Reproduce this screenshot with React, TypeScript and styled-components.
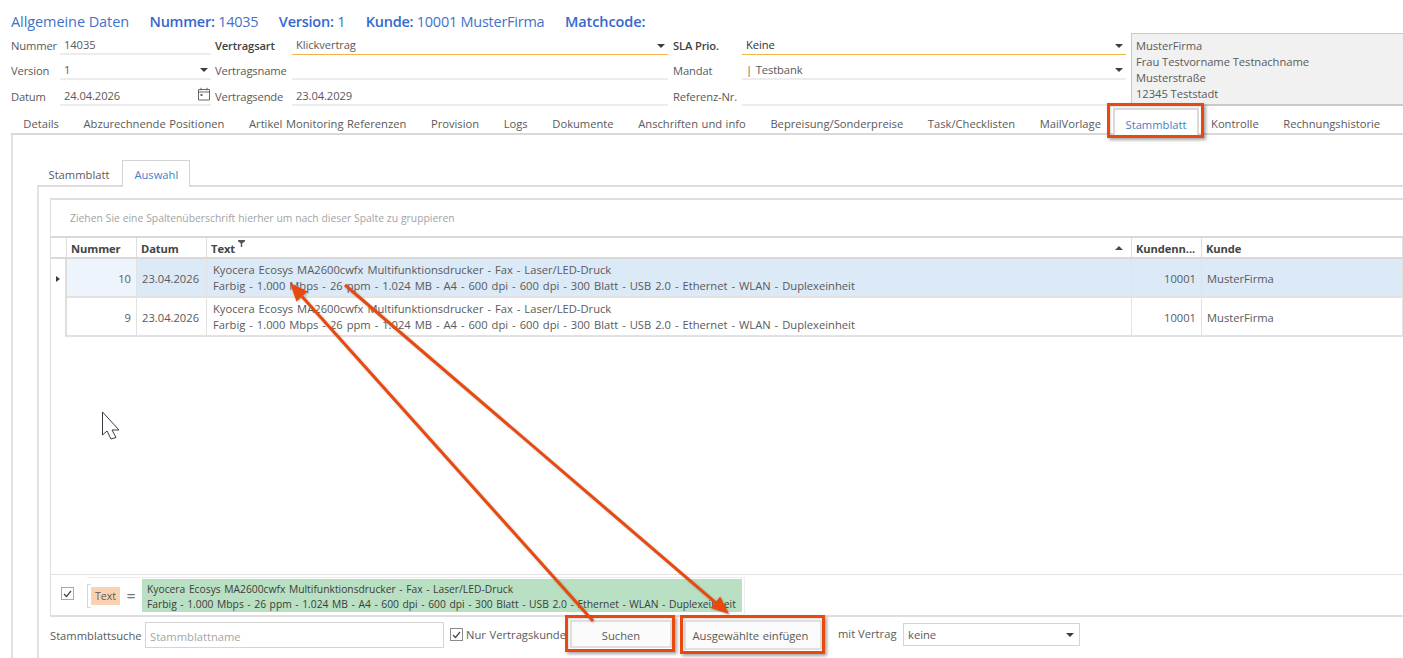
import React from "react";
import styled, { createGlobalStyle } from "styled-components";

const GlobalStyle = createGlobalStyle`
  html, body {
    margin: 0;
    padding: 0;
    background: #fff;
  }
  * {
    box-sizing: border-box;
  }
`;

const Page = styled.div`
  position: relative;
  width: 1403px;
  height: 658px;
  overflow: hidden;
  background: #fff;
  color: #5a5a5a;
  font-family: "Open Sans", "Noto Sans", sans-serif;
  font-size: 11.2px;
  word-spacing: 0.8px;
  display: flex;
  flex-direction: column;
`;

// Title row
const TitleBar = styled.div`
  height: 33px;
  padding: 12px 0 0 11px;
  display: flex;
  gap: 20.5px;
  font-size: 14.5px;
  line-height: 19px;
  color: #3f72c9;
  letter-spacing: -0.25px;
  word-spacing: 0;
  white-space: nowrap;
`;

const TitleItem = styled.span<{ $wide?: boolean }>`
  letter-spacing: ${(p) => (p.$wide ? "-0.08px" : "-0.25px")};
  b {
    font-weight: 600;
    color: #3468cf;
  }
`;

// Form on top
const FormGrid = styled.div`
  height: 73px;
  margin-left: 11px;
  display: grid;
  grid-template-columns: 49px 151px 81px 376px 74px 384px 277px;
  grid-template-rows: 22px 25px 26px;
  line-height: 15px;
`;

const Label = styled.div<{ $bold?: boolean; $inset?: number }>`
  display: flex;
  align-items: flex-end;
  padding: 0 0 2px ${(p) => p.$inset ?? 0}px;
  color: ${(p) => (p.$bold ? "#3f3f3f" : "#5a5a5a")};
  font-weight: ${(p) => (p.$bold ? 600 : 400)};
  letter-spacing: -0.15px;
  word-spacing: 0;
  white-space: nowrap;
`;

const Field = styled.div<{ $accent?: boolean; $dark?: boolean }>`
  display: flex;
  align-items: flex-end;
  justify-content: space-between;
  padding: 0 3px ${(p) => (p.$accent ? "2px" : "1px")} 4px;
  border-bottom: ${(p) => (p.$accent ? "1px solid #f5b44a" : "2px solid #ececec")};
  color: ${(p) => (p.$dark ? "#333" : "#5a5a5a")};
  letter-spacing: -0.1px;
`;

const Caret = styled.span<{ $up?: boolean; $lift?: number }>`
  width: 0;
  height: 0;
  margin-bottom: ${(p) => p.$lift ?? 0}px;
  border-left: 4px solid transparent;
  border-right: 4px solid transparent;
  border-top: ${(p) => (p.$up ? "0" : "4px solid #3c3c3c")};
  border-bottom: ${(p) => (p.$up ? "4px solid #4a4a4a" : "0")};
`;

const CalendarSlot = styled.span`
  display: flex;
  margin: 0 -3px 2px 0;
`;

const AddressBox = styled.div`
  grid-column: 7;
  grid-row: 1 / span 3;
  margin-left: 5px;
  padding: 4px 0 0 4px;
  background: #f1f1f1;
  border: 1px solid #c9c9c9;
  border-width: 1px 0 2px 1px;
  line-height: 16px;
  color: #5a5a5a;
  letter-spacing: -0.05px;
  word-spacing: 0;
`;

// Outer tabs
const TabStrip = styled.div`
  height: 29px;
  margin-left: 11px;
  padding-top: 2px;
  display: flex;
  align-items: stretch;
  border-bottom: 2px solid #d9d9d9;
  word-spacing: 0.6px;
`;

const Tab = styled.div<{ $active?: boolean }>`
  position: relative;
  display: flex;
  align-items: center;
  padding: ${(p) => (p.$active ? "4px 10.3px 0" : "5px 12.3px 0")};
  white-space: nowrap;
  margin-bottom: ${(p) => (p.$active ? "-2px" : "0")};
  color: ${(p) => (p.$active ? "#3f7fcb" : "#5a5a5a")};
  background: #fff;
  ${(p) => p.$active && "border: 2px solid #d9d9d9; border-bottom: 0;"}
`;

const OuterPanel = styled.div`
  flex: 1;
  min-height: 0;
  margin-left: 11px;
  padding: 25px 0 0 24px;
  border-left: 2px solid #e2e2e2;
  display: flex;
  flex-direction: column;
`;

const InnerTabs = styled.div`
  height: 25px;
  display: flex;
`;

const InnerTab = styled.div<{ $active?: boolean }>`
  height: ${(p) => (p.$active ? "27px" : "25px")};
  padding: ${(p) => (p.$active ? "1px 11px 0" : "3px 13px 0 11.5px")};
  display: flex;
  align-items: center;
  background: #fff;
  color: ${(p) => (p.$active ? "#3f7fcb" : "#5a5a5a")};
  position: relative;
  z-index: 1;
  border: ${(p) => (p.$active ? "1px solid #d4d4d4" : "0")};
  border-bottom: 0;
`;

const InnerPanel = styled.div`
  flex: 1;
  min-height: 0;
  padding: 11px 0 0 11px;
  border-top: 2px solid #dcdcdc;
  border-left: 2px solid #e2e2e2;
  display: flex;
  flex-direction: column;
`;

// Data grid
const GridBox = styled.div`
  height: 419px;
  border: 2px solid #dedede;
  border-left-width: 1px;
  border-right: 0;
  display: flex;
  flex-direction: column;
`;

const GroupPanel = styled.div`
  height: 38px;
  padding: 0 0 0 19px;
  display: flex;
  align-items: center;
  color: #a3a3a3;
  font-size: 10.35px;
  word-spacing: 0.2px;
  border-bottom: 2px solid #d9d9d9;
`;

const columns = "16px 70px 70px 925px 70px 1fr";

const HeadRow = styled.div`
  height: 21px;
  display: grid;
  grid-template-columns: ${columns};
  border-bottom: 2px solid #d9d9d9;
`;

const HeadCell = styled.div`
  position: relative;
  display: flex;
  align-items: center;
  justify-content: space-between;
  padding: 1px 8px 0 4px;
  font-weight: 700;
  color: #444;
  border-right: 1px solid #dedede;
  white-space: nowrap;
  overflow: hidden;
`;

const HeadText = styled.span`
  letter-spacing: -0.1px;
`;

const TableRow = styled.div<{ $selected?: boolean }>`
  height: 39px;
  display: grid;
  grid-template-columns: ${columns};
  background: ${(p) => (p.$selected ? "#dce9f7" : "#fff")};
`;

const Indicator = styled.div`
  display: flex;
  align-items: center;
  justify-content: center;
  background: #fff;
  border-right: 2px solid #dedede;
`;

const RowPointer = styled.span`
  width: 0;
  height: 0;
  border-top: 3.5px solid transparent;
  border-bottom: 3.5px solid transparent;
  border-left: 4px solid #3c3c3c;
`;

const Cell = styled.div<{ $right?: boolean; $focused?: boolean }>`
  display: flex;
  align-items: center;
  justify-content: ${(p) => (p.$right ? "flex-end" : "flex-start")};
  padding: 1px 5px 0 5px;
  background: ${(p) => (p.$focused ? "#edf4fb" : "transparent")};
  border-right: 1px solid #e2e2e2;
  border-bottom: 2px solid #e2e2e2;
  white-space: nowrap;
`;

const TextLines = styled.div<{ $selected?: boolean }>`
  margin-top: ${(p) => (p.$selected ? "0" : "-1px")};
  padding-left: 1px;
  line-height: 16px;
  word-spacing: 1.05px;
`;

const GridSpacer = styled.div`
  flex: 1;
`;

const FilterBar = styled.div`
  height: 41px;
  padding: 2px 0 0 10px;
  display: flex;
  align-items: flex-start;
  border-top: 1px solid #e4e4e4;
  color: #3c3c3c;
`;

const CheckBox = styled.span<{ $dark?: boolean }>`
  flex: none;
  width: 13px;
  height: 13px;
  display: flex;
  align-items: center;
  justify-content: center;
  background: #fff;
  border: 1px solid ${(p) => (p.$dark ? "#8a8a8a" : "#a8a8a8")};
`;

const FilterCheck = styled.div`
  padding-top: 10px;
`;

const FilterExpr = styled.div`
  margin-left: 13px;
  padding: 1px 2px 2px 0;
  display: flex;
  align-items: center;
  border: 1px solid #eeeeee;
  border-left: 0;
  border-bottom: 0;
`;

const Bracket = styled.span`
  width: 4px;
  height: 24px;
  border: 1px solid #d8d8d8;
  border-right: 0;
`;

const FieldChip = styled.span`
  height: 18px;
  width: 29px;
  display: flex;
  align-items: center;
  justify-content: center;
  background: #fbd2b1;
  color: #5a5a5a;
  font-size: 10.5px;
`;

const Equals = styled.span`
  width: 22px;
  text-align: center;
  font-size: 16px;
  line-height: 18px;
  color: #777;
`;

const ValueChip = styled.div`
  width: 600px;
  height: 33px;
  padding: 3px 5px 0;
  background: #b9e0c2;
  font-size: 10.3px;
  word-spacing: 0.9px;
  line-height: 14.5px;
  white-space: nowrap;
`;

// Bottom row
const SearchRow = styled.div`
  flex: 1;
  display: flex;
  align-items: flex-start;
  padding-top: 5px;
  line-height: 15px;
`;

const SearchLabel = styled.span`
  width: 95px;
  margin-top: 6px;
  white-space: nowrap;
  word-spacing: 0;
`;

const SearchInput = styled.div`
  width: 299px;
  height: 26px;
  padding: 2px 0 0 4px;
  display: flex;
  align-items: center;
  background: #fff;
  border: 1px solid #d4d4d4;
  color: #a5a5a5;
`;

const CheckWrap = styled.label`
  margin: 5px 0 0 6px;
  display: flex;
  align-items: center;
  gap: 3px;
  width: 120px;
  white-space: nowrap;
`;

const ActionButton = styled.div<{ $width: number; $height: number; $gap: number; $pad: string }>`
  position: relative;
  flex: none;
  width: ${(p) => p.$width}px;
  height: ${(p) => p.$height}px;
  margin: -2px 0 0 ${(p) => p.$gap}px;
  padding: ${(p) => p.$pad};
  display: flex;
  align-items: center;
  justify-content: center;
  background: #fbfbfb;
  border: 2px solid #e0e0e0;
  white-space: nowrap;
`;

const SelectLabel = styled.span`
  width: 65px;
  margin: 4px 0 0 16px;
  white-space: nowrap;
  word-spacing: 0;
`;

const SelectBox = styled.div`
  width: 177px;
  height: 23px;
  margin-top: 1px;
  padding: 0 5px 0 4px;
  display: flex;
  align-items: center;
  justify-content: space-between;
  border: 1px solid #d4d4d4;
`;

// Annotations drawn over the screenshot
const Marker = styled.span<{ $inset: string }>`
  position: absolute;
  inset: ${(p) => p.$inset};
  border: 3px solid #e8490f;
  box-shadow: 2px 2px 3px rgba(0, 0, 0, 0.35), inset 1px 1px 2px rgba(0, 0, 0, 0.15);
  pointer-events: none;
  z-index: 5;
`;

const ArrowLayer = styled.svg`
  position: absolute;
  left: 0;
  top: 0;
  z-index: 6;
  pointer-events: none;
  filter: drop-shadow(1px 1px 1px rgba(0, 0, 0, 0.25));
`;

const CursorIcon = styled.svg`
  position: absolute;
  left: 100px;
  top: 410px;
  z-index: 6;
`;

const FilterIcon = styled.svg`
  position: absolute;
  left: 31px;
  top: 2px;
`;

const CalendarIcon = () => (
  <svg width="14" height="14" viewBox="0 0 14 14" fill="none" stroke="#666" strokeWidth="1">
    <path d="M1.5 2.5h11v10.500h-11zM1.500 5h11M4 .8v2.500M10 .8v2.500" />
    <rect x="3.500" y="7" width="2" height="2" fill="#666" stroke="none" />
  </svg>
);

const CheckMark = () => (
  <svg width="9" height="8" viewBox="0 0 9 8" fill="none" stroke="#444" strokeWidth="1.200">
    <path d="M1 4l2.500 2.500L8 1" />
  </svg>
);

type ArrowProps = { x1: number; y1: number; x2: number; y2: number };

// straight line with a filled head at x2/y2
const Arrow = ({ x1, y1, x2, y2 }: ArrowProps) => {
  const len = Math.hypot(x2 - x1, y2 - y1);
  const ux = (x2 - x1) / len;
  const uy = (y2 - y1) / len;
  const bx = x2 - ux * 18;
  const by = y2 - uy * 18;
  const hw = 7.5;
  const points = `${x2},${y2} ${bx - uy * hw},${by + ux * hw} ${bx + uy * hw},${by - ux * hw}`;
  return (
    <g>
      <line x1={x1} y1={y1} x2={bx} y2={by} stroke="#e8490f" strokeWidth="3" />
      <polygon points={points} fill="#e8490f" />
    </g>
  );
};

const tabs = [
  "Details",
  "Abzurechnende Positionen",
  "Artikel Monitoring Referenzen",
  "Provision",
  "Logs",
  "Dokumente",
  "Anschriften und info",
  "Bepreisung/Sonderpreise",
  "Task/Checklisten",
  "MailVorlage",
  "Stammblatt",
  "Kontrolle",
  "Rechnungshistorie",
];

const line1 = "Kyocera Ecosys MA2600cwfx Multifunktionsdrucker - Fax - Laser/LED-Druck";
const line2 =
  "Farbig - 1.000 Mbps - 26 ppm - 1.024 MB - A4 - 600 dpi - 600 dpi - 300 Blatt - USB 2.0 - Ethernet - WLAN - Duplexeinheit";

const rows = [
  { nr: 10, selected: true },
  { nr: 9, selected: false },
];

function App() {
  return (
    <Page>
      <GlobalStyle />
      <TitleBar>
        <TitleItem $wide>Allgemeine Daten</TitleItem>
        <TitleItem>
          <b>Nummer:</b> 14035
        </TitleItem>
        <TitleItem>
          <b>Version:</b> 1
        </TitleItem>
        <TitleItem>
          <b>Kunde:</b> 10001 MusterFirma
        </TitleItem>
        <TitleItem $wide>
          <b>Matchcode:</b>
        </TitleItem>
      </TitleBar>

      <FormGrid>
        <Label>Nummer</Label>
        <Field>14035</Field>
        <Label $bold $inset={4}>Vertragsart</Label>
        <Field $accent>
          Klickvertrag
          <Caret $lift={4} />
        </Field>
        <Label $bold $inset={5}>SLA Prio.</Label>
        <Field $accent $dark>
          Keine
          <Caret $lift={4} />
        </Field>
        <AddressBox>
          MusterFirma
          <br />
          Frau Testvorname Testnachname
          <br />
          Musterstraße
          <br />
          12345 Teststadt
        </AddressBox>

        <Label>Version</Label>
        <Field>
          1
          <Caret $lift={5} />
        </Field>
        <Label $inset={4}>Vertragsname</Label>
        <Field />
        <Label $inset={5}>Mandat</Label>
        <Field>
          | Testbank
          <Caret $lift={5} />
        </Field>

        <Label>Datum</Label>
        <Field>
          24.04.2026
          <CalendarSlot>
            <CalendarIcon />
          </CalendarSlot>
        </Field>
        <Label $inset={4}>Vertragsende</Label>
        <Field>23.04.2029</Field>
        <Label $inset={5}>Referenz-Nr.</Label>
        <Field />
      </FormGrid>

      <TabStrip>
        {tabs.map((t) => (
          <Tab key={t} $active={t === "Stammblatt"}>
            {t}
            {t === "Stammblatt" && <Marker $inset="-7px -7px -3px -8px" />}
          </Tab>
        ))}
      </TabStrip>

      <OuterPanel>
        <InnerTabs>
          <InnerTab>Stammblatt</InnerTab>
          <InnerTab $active>Auswahl</InnerTab>
        </InnerTabs>
        <InnerPanel>
          <GridBox>
            <GroupPanel>Ziehen Sie eine Spaltenüberschrift hierher um nach dieser Spalte zu gruppieren</GroupPanel>
            <HeadRow>
              <HeadCell />
              <HeadCell>
                <HeadText>Nummer</HeadText>
              </HeadCell>
              <HeadCell>
                <HeadText>Datum</HeadText>
              </HeadCell>
              <HeadCell>
                <HeadText>Text</HeadText>
                <FilterIcon width="7" height="7" viewBox="0 0 7 7">
                  <path d="M0 0h7v1.200L4.200 3.500V7H2.800V3.500L0 1.200z" fill="#555" />
                </FilterIcon>
                <Caret $up />
              </HeadCell>
              <HeadCell>
                <HeadText>Kundenn...</HeadText>
              </HeadCell>
              <HeadCell>
                <HeadText>Kunde</HeadText>
              </HeadCell>
            </HeadRow>
            {rows.map((r) => (
              <TableRow key={r.nr} $selected={r.selected}>
                <Indicator>{r.selected && <RowPointer />}</Indicator>
                <Cell $right $focused={r.selected}>
                  {r.nr}
                </Cell>
                <Cell>23.04.2026</Cell>
                <Cell>
                  <TextLines $selected={r.selected}>
                    {line1}
                    <br />
                    {line2}
                  </TextLines>
                </Cell>
                <Cell $right>10001</Cell>
                <Cell>MusterFirma</Cell>
              </TableRow>
            ))}
            <GridSpacer />
            <FilterBar>
              <FilterCheck>
                <CheckBox>
                  <CheckMark />
                </CheckBox>
              </FilterCheck>
              <FilterExpr>
                <Bracket />
                <FieldChip>Text</FieldChip>
                <Equals>=</Equals>
                <ValueChip>
                  {line1}
                  <br />
                  {line2}
                </ValueChip>
              </FilterExpr>
            </FilterBar>
          </GridBox>

          <SearchRow>
            <SearchLabel>Stammblattsuche</SearchLabel>
            <SearchInput>Stammblattname</SearchInput>
            <CheckWrap>
              <CheckBox $dark>
                <CheckMark />
              </CheckBox>
              Nur Vertragskunde
            </CheckWrap>
            <ActionButton $width={102} $height={28} $gap={0} $pad="3px 0 0">
              Suchen
              <Marker $inset="-7px -5px -6px -7px" />
            </ActionButton>
            <ActionButton $width={138} $height={30} $gap={12} $pad="1px 5px 0 0">
              Ausgewählte einfügen
              <Marker $inset="-7px -5px -6px -6px" />
            </ActionButton>
            <SelectLabel>mit Vertrag</SelectLabel>
            <SelectBox>
              keine
              <Caret />
            </SelectBox>
          </SearchRow>
        </InnerPanel>
      </OuterPanel>

      <ArrowLayer width="1403" height="658" viewBox="0 0 1403 658">
        <Arrow x1={593} y1={621} x2={290} y2={283} />
        <Arrow x1={345} y1={285} x2={729} y2={614} />
      </ArrowLayer>

      <CursorIcon width="22" height="30" viewBox="0 0 22 30">
        <path
          d="M2.500 2v23l4.500-4 4 8 5-1.500-4-7.500h7z"
          fill="#fff"
          stroke="#3a3a44"
          strokeWidth="1"
          strokeLinejoin="round"
        />
      </CursorIcon>
    </Page>
  );
}

export default App;
